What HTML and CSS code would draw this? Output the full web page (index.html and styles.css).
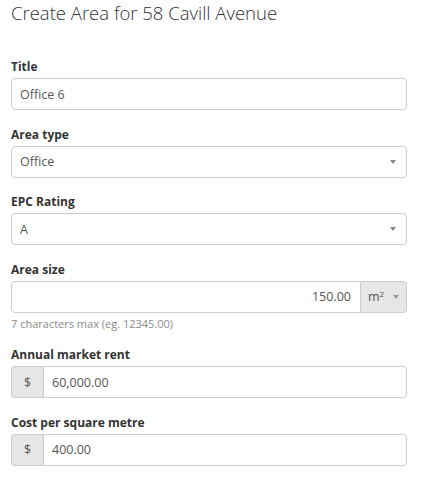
FILE: index.html
```html
<!DOCTYPE html>
<html>
<head>
<meta charset="utf-8">
<link rel="stylesheet" href="styles.css">
</head>
<body>
<div class="page">
  <h1 class="heading">Create Area for 58 Cavill Avenue</h1>
  <form class="form">
    <div class="group">
      <label class="label">Title</label>
      <div class="control">Office 6</div>
    </div>
    <div class="group">
      <label class="label">Area type</label>
      <div class="control select"><span>Office</span><span class="caret"></span></div>
    </div>
    <div class="group">
      <label class="label">EPC Rating</label>
      <div class="control select"><span>A</span><span class="caret"></span></div>
    </div>
    <div class="group">
      <label class="label">Area size</label>
      <div class="input-group">
        <div class="control grow right">150.00</div>
        <div class="addon addon-right">m<sup class="sup">2</sup><span class="caret small"></span></div>
      </div>
      <div class="help">7 characters max (eg. 12345.00)</div>
    </div>
    <div class="group">
      <label class="label">Annual market rent</label>
      <div class="input-group">
        <div class="addon addon-left">$</div>
        <div class="control grow">60,000.00</div>
      </div>
    </div>
    <div class="group">
      <label class="label">Cost per square metre</label>
      <div class="input-group">
        <div class="addon addon-left">$</div>
        <div class="control grow">400.00</div>
      </div>
    </div>
  </form>
</div>
</body>
</html>
```
FILE: styles.css
```css
* { box-sizing: border-box; }
html, body { margin: 0; padding: 0; background: #fff; }
body { font-family: "Open Sans", "Noto Sans", sans-serif; color: #333; }
.page { padding: 0 17px 0 11px; }
.heading {
  margin: 0;
  padding-top: 1px;
  font-size: 18.5px;
  font-weight: 300;
  line-height: 24px;
  color: #333;
  height: 58px;
}
.form { display: flex; flex-direction: column; }
.group { display: flex; flex-direction: column; margin-bottom: 15.5px; }
.label {
  display: block;
  font-size: 12px;
  font-weight: 700;
  line-height: 18px;
  margin-bottom: 2px;
  color: #333;
}
.control {
  height: 32px;
  border: 1px solid #ccc;
  border-radius: 4px;
  padding: 0 8px;
  display: flex;
  align-items: center;
  font-size: 12.5px;
  color: #555;
  background: #fff;
}
.select { justify-content: space-between; padding-right: 10px; }
.caret {
  width: 0; height: 0;
  border-left: 3px solid transparent;
  border-right: 3px solid transparent;
  border-top: 4px solid #888;
}
.caret.small { margin-left: 9px; border-top-color: #999; }
.input-group { display: flex; }
.grow { flex: 1; }
.right { justify-content: flex-end; border-radius: 4px 0 0 4px; padding-right: 9px; }
.addon {
  height: 32px;
  background: #e6e6e6;
  border: 1px solid #ccc;
  display: flex;
  align-items: center;
  font-size: 12.5px;
  color: #555;
}
.addon-right {
  width: 46px;
  border-left: 0;
  border-radius: 0 4px 4px 0;
  padding-left: 7px;
}
.addon-left {
  width: 32px;
  border-right: 0;
  border-radius: 4px 0 0 4px;
  justify-content: center;
}
.addon-left + .control { border-radius: 0 4px 4px 0; }
.sup { font-size: 8px; position: relative; top: -1px; align-self: flex-start; margin-top: 7px; }
.help {
  font-size: 11px;
  color: #8a8a8a;
  line-height: 14px;
  margin-top: 4px;
}
```
